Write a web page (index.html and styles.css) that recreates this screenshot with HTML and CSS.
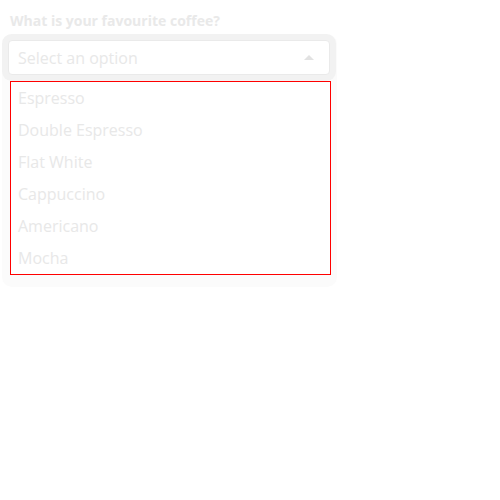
FILE: index.html
```html
<!DOCTYPE html>
<html>
<head>
<meta charset="utf-8">
<link rel="stylesheet" href="styles.css">
</head>
<body>
<div class="wrap">
  <div class="label">What is your favourite coffee?</div>
  <div class="panel">
    <div class="select">
      <span class="placeholder">Select an option</span>
      <span class="caret"></span>
    </div>
    <ul class="list">
      <li>Espresso</li>
      <li>Double Espresso</li>
      <li>Flat White</li>
      <li>Cappuccino</li>
      <li>Americano</li>
      <li>Mocha</li>
    </ul>
  </div>
</div>
</body>
</html>
```
FILE: styles.css
```css
* { box-sizing: border-box; }
body {
  margin: 0;
  background: #ffffff;
  font-family: "Open Sans", "Noto Sans", sans-serif;
}
.wrap {
  padding: 12px 0 0 2px;
}
.label {
  margin-left: 8px;
  height: 18px;
  line-height: 18px;
  font-size: 14px;
  font-weight: 700;
  color: #e9e9e9;
  margin-bottom: 4px;
}
.panel {
  width: 335px;
  padding: 6px 7px 12px 6px;
  background: #fbfbfb;
  border-radius: 10px;
}
.select {
  height: 35px;
  border: 1px solid #eaeaea;
  border-radius: 4px;
  background: #fff;
  box-shadow: 0 0 0 6px #f2f2f2;
  display: flex;
  align-items: center;
  justify-content: space-between;
  padding: 0 15px 0 9px;
}
.placeholder {
  font-size: 16px;
  color: #e8e8e8;
}
.caret {
  width: 0;
  height: 0;
  border-left: 5px solid transparent;
  border-right: 5px solid transparent;
  border-bottom: 5px solid #e2e2e2;
}
.list {
  list-style: none;
  margin: 6px 0 0 2px;
  padding: 0;
  width: 321px;
  border: 1px solid #ff0000;
  background: #fff;
}
.list li {
  height: 32px;
  line-height: 32px;
  padding-left: 7px;
  font-size: 16px;
  color: #e8e8e8;
}
```
